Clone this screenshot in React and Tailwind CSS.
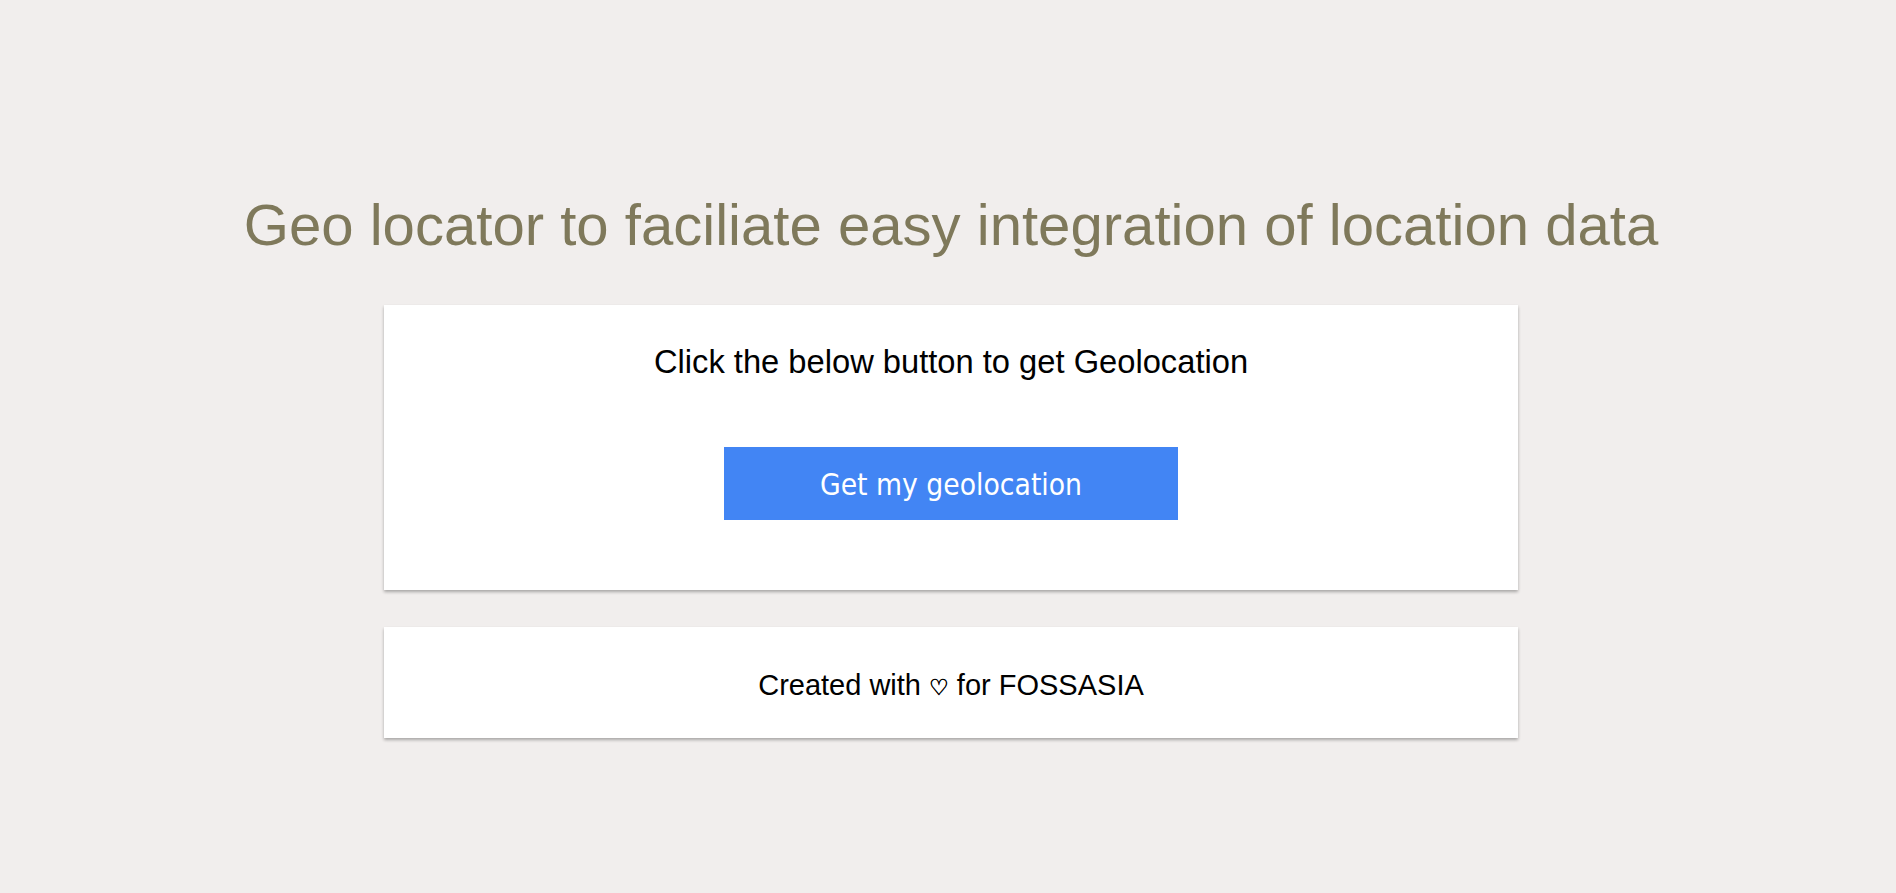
import React from 'react';

const App = () => {
    return (
        <div className="min-h-[893px] bg-[#f1eeed] font-['Liberation_Sans',Arial,sans-serif] flex flex-col items-center pt-[193px] pl-[6px]">
            <h1 className="text-[58.1px] leading-[64px] font-normal text-[#7f795b] whitespace-nowrap">
                Geo locator to faciliate easy integration of location data
            </h1>

            <div className="w-[1134px] h-[285px] mt-[48px] bg-white shadow-[0_2px_3px_rgba(0,0,0,0.3)] flex flex-col items-center">
                <p className="mt-[37px] text-[32.7px] leading-[40px] text-black">Click the below button to get Geolocation</p>
                <button className="w-[454px] h-[73px] mt-[65px] pt-[3px] bg-[#4285f4] text-white text-[29.7px] [font-stretch:condensed] font-['DejaVu_Sans',sans-serif]">
                    Get my geolocation
                </button>
            </div>

            <div className="w-[1134px] h-[111px] mt-[37px] bg-white shadow-[0_2px_3px_rgba(0,0,0,0.3)] flex items-center justify-center">
                <p className="text-[29px] leading-[32px] text-black pt-[7px]">
                    Created with <span className="font-['DejaVu_Sans',sans-serif] text-[22px] [-webkit-text-stroke:0.6px_black]">♡</span> for FOSSASIA
                </p>
            </div>
        </div>
    );
};

export default App;
